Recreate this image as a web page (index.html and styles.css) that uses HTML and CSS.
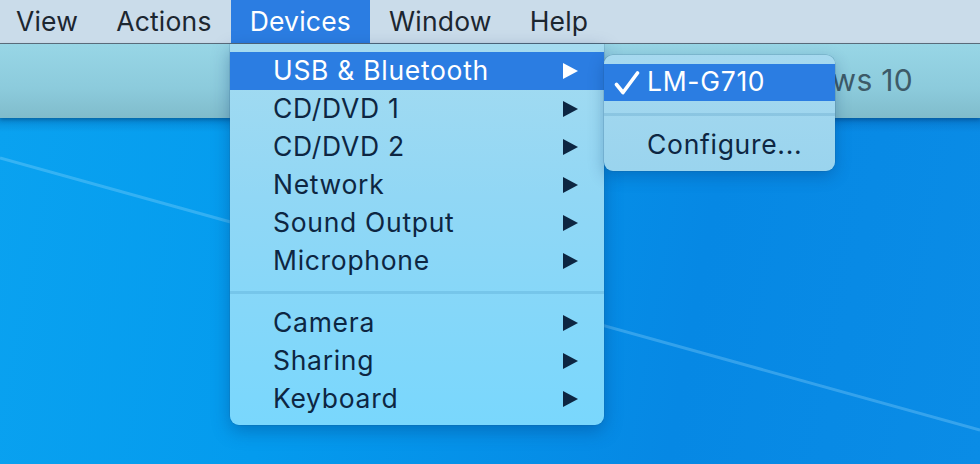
FILE: index.html
```html
<!DOCTYPE html>
<html lang="en">
<head>
<meta charset="utf-8">
<title>Devices menu</title>
<link rel="stylesheet" href="styles.css">
</head>
<body>
<div class="screen">
  <nav class="menubar">
    <span class="mb-item first">View</span>
    <span class="mb-item">Actions</span>
    <span class="mb-item active">Devices</span>
    <span class="mb-item">Window</span>
    <span class="mb-item">Help</span>
  </nav>
  <div class="titlebar"><span class="title">Windows 10</span></div>
  <div class="desktop">
    <svg class="streak" width="980" height="346" viewBox="0 0 980 346" aria-hidden="true">
      <line x1="0" y1="40" x2="980" y2="312" stroke="rgba(170,225,255,0.28)" stroke-width="3"/>
    </svg>
  </div>

  <div class="menu main-menu">
    <div class="row hl"><span class="label">USB &amp; Bluetooth</span><span class="arrow"></span></div>
    <div class="row"><span class="label">CD/DVD 1</span><span class="arrow"></span></div>
    <div class="row"><span class="label">CD/DVD 2</span><span class="arrow"></span></div>
    <div class="row"><span class="label">Network</span><span class="arrow"></span></div>
    <div class="row"><span class="label">Sound Output</span><span class="arrow"></span></div>
    <div class="row"><span class="label">Microphone</span><span class="arrow"></span></div>
    <div class="sep"></div>
    <div class="row"><span class="label">Camera</span><span class="arrow"></span></div>
    <div class="row"><span class="label">Sharing</span><span class="arrow"></span></div>
    <div class="row"><span class="label">Keyboard</span><span class="arrow"></span></div>
  </div>

  <div class="menu sub-menu">
    <div class="row hl">
      <span class="check"><svg width="26" height="26" viewBox="0 0 26 26" aria-hidden="true"><path d="M2.5 14.5 L9 22.5 L23.5 3" fill="none" stroke="#fff" stroke-width="3.6" stroke-linecap="round" stroke-linejoin="round"/></svg></span>
      <span class="label">LM-G710</span>
    </div>
    <div class="sep"></div>
    <div class="row"><span class="check"></span><span class="label">Configure...</span></div>
  </div>
</div>
</body>
</html>
```
FILE: styles.css
```css
* { box-sizing: border-box; }
html, body { margin: 0; padding: 0; }
body {
  width: 980px;
  height: 464px;
  overflow: hidden;
  font-family: Inter, "Noto Sans", "Liberation Sans", sans-serif;
}
.screen {
  position: relative;
  width: 980px;
  height: 464px;
  display: flex;
  flex-direction: column;
}
.menubar {
  height: 44px;
  flex: none;
  display: flex;
  align-items: stretch;
  background: #cadcea;
  border-bottom: 1px solid #5d6f7c;
  color: #1c2630;
  font-size: 26.5px;
  letter-spacing: 0.2px;
}
.mb-item {
  display: flex;
  align-items: center;
  padding: 0 19px 1px;
}
.mb-item.first { margin-left: -3px; }
.mb-item.active {
  background: #2b7de2;
  color: #fff;
}
.titlebar {
  height: 74px;
  flex: none;
  display: flex;
  align-items: center;
  justify-content: flex-end;
  padding-right: 67px;
  background: linear-gradient(180deg, #98d6e6 0%, #8ccbdc 60%, #80bccb 100%);
  box-shadow: 0 2px 4px rgba(0, 40, 80, 0.35);
  position: relative;
  z-index: 1;
  color: #3d5a68;
  font-size: 30px;
  letter-spacing: 0.3px;
}
.title { padding-bottom: 2px; }
.desktop {
  flex: 1;
  position: relative;
  overflow: hidden;
  background:
    linear-gradient(180deg, rgba(0, 60, 130, 0.25) 0px, rgba(0, 60, 130, 0) 14px),
    linear-gradient(100deg, #0aa2f0 0%, #049bee 30%, #0688e4 70%, #0a8ce6 100%);
}
.streak { position: absolute; left: 0; top: 0; filter: blur(0.6px); }

.menu {
  position: absolute;
  z-index: 5;
  color: #0d2642;
  font-size: 26.5px;
  letter-spacing: 0.7px;
}
.main-menu {
  left: 230px;
  top: 44px;
  width: 374px;
  padding: 8px 0 7px;
  border-radius: 0 0 9px 9px;
  background: linear-gradient(180deg, #a5dbf0 0%, #91d7f5 40%, #79d7fd 100%);
  box-shadow: 0 6px 18px rgba(0, 50, 110, 0.35), 0 0 0 0.5px rgba(40, 90, 130, 0.3);
}
.row {
  height: 38px;
  display: flex;
  align-items: center;
  padding: 0 26px 0 43px;
}
.row .label { flex: 1; padding-bottom: 3px; }
.row.hl { background: #2b7de2; color: #fff; }
.arrow {
  width: 0;
  height: 0;
  border-top: 8px solid transparent;
  border-bottom: 8px solid transparent;
  border-left: 15px solid #0d2642;
}
.row.hl .arrow { border-left-color: #fff; }
.sep {
  height: 24px;
  display: flex;
  align-items: center;
}
.sep::before {
  content: "";
  display: block;
  width: 100%;
  height: 3px;
  background: rgba(30, 110, 160, 0.16);
}
.sub-menu {
  left: 604px;
  top: 55px;
  width: 231px;
  padding: 9px 0 7px;
  border-radius: 9px;
  background: linear-gradient(180deg, #a6d9ef 0%, #9ad4ee 100%);
  box-shadow: 0 5px 16px rgba(0, 50, 110, 0.3), 0 0 0 0.5px rgba(40, 90, 130, 0.3);
}
.sub-menu .row { height: 37px; padding: 0 10px 0 10px; }
.sub-menu .sep { height: 26px; }
.check {
  width: 33px;
  height: 26px;
  display: flex;
  align-items: center;
}
```
